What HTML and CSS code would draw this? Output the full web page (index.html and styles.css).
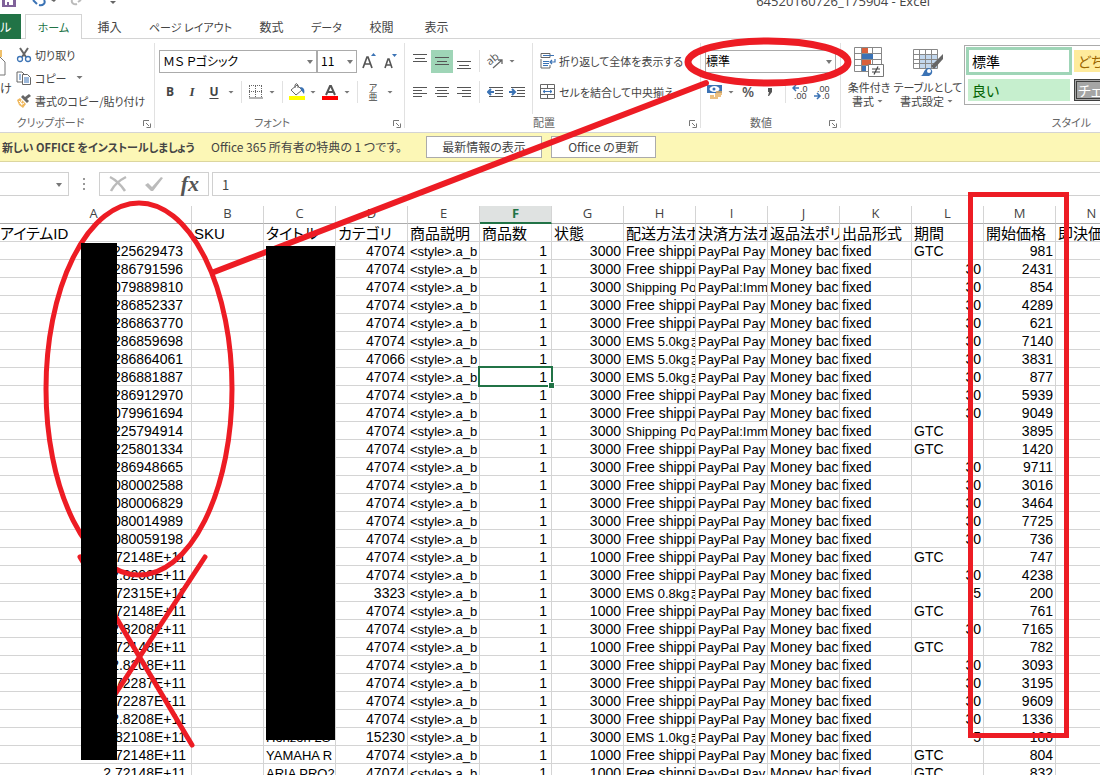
FILE: index.html
```html
<!DOCTYPE html>
<html lang="ja">
<head>
<meta charset="utf-8">
<title>64520160726_175904 - Excel</title>
<link rel="stylesheet" href="styles.css">
</head>
<body>
<div class="app">
  <header class="titlebar">
    <svg class="quick" width="130" height="14" viewBox="0 0 130 14" fill="none">
      <path d="M2 0v7h14V0h-3v5H5V0z" fill="#80629a"/><path d="M7 2h2v3H7z" fill="#80629a"/>
      <path d="M33 0l4 4M39 5c4 1 7-2 5-5" stroke="#3b73b5" stroke-width="2"/><path d="M51 0h5l-2 2z" fill="#666"/>
      <path d="M72 0c-1 3 2 5 5 4M78 2l3-2" stroke="#bbb" stroke-width="2"/>
      <path d="M110 1h6l-3 3z" fill="#666"/>
    </svg>
    <span class="title">64520160726_175904 - Excel</span>
  </header>

  <nav class="tabs">
    <button class="tab file">ル</button>
    <button class="tab active kana">ホーム</button>
    <button class="tab">挿入</button>
    <button class="tab wide kana">ページ レイアウト</button>
    <button class="tab">数式</button>
    <button class="tab kana">データ</button>
    <button class="tab">校閲</button>
    <button class="tab">表示</button>
  </nav>

  <div class="ribbon">
    <section class="group clipboard">
      <div class="tools">
        <button class="paste">
          <svg width="7" height="28" viewBox="0 0 7 28" fill="none"><path d="M0 2h2v7H0z" fill="#efc06b"/><path d="M0 9l5 5v13H0" stroke="#777"/></svg>
          <span>け</span>
        </button>
        <div class="commands">
          <button class="cmd"><svg width="16" height="16" viewBox="0 0 16 16" fill="none"><path d="M4 1l6 9M12 1L6 10" stroke="#666" stroke-width="2"/><circle cx="4" cy="12" r="2.5" stroke="#3b73b5" stroke-width="1.3"/><circle cx="12" cy="12" r="2.5" stroke="#3b73b5" stroke-width="1.3"/></svg>切り取り</button>
          <button class="cmd"><svg width="16" height="16" viewBox="0 0 16 16" fill="none"><path d="M6 12H1V2h5l2 2" stroke="#666"/><path d="M3 5h2M3 7h2M3 9h2" stroke="#3b73b5"/><path d="M6.500 4.500h5l3 3v7h-8z" fill="#fff" stroke="#666"/><path d="M8 8h5M8 10h5M8 12h5" stroke="#3b73b5"/></svg>コピー<i class="arrow gap"></i></button>
          <button class="cmd"><svg width="16" height="16" viewBox="0 0 16 16" fill="none"><path d="M1 7l3-2 6 6-3 4-4-3z" fill="#f0b95f"/><path d="M3 8l3 3M6 7l-2 4M5 12l3-2" stroke="#fff"/><path d="M5 4l6 6 2-2-2-2 4-3-2-2-4 3-2-2z" fill="#666"/></svg>書式のコピー/貼り付け</button>
        </div>
      </div>
      <footer class="caption">クリップボード<svg class="launch" width="8" height="8" viewBox="0 0 8 8" fill="none" stroke="#777"><path d="M.5 6V.5H6M3 3l3 3M7.500 3.500v4h-4"/></svg></footer>
    </section>

    <section class="group font">
      <div class="tools stack">
        <div class="line">
          <span class="drop name"><select aria-label="フォント"><option>ＭＳ Ｐゴシック</option></select></span>
          <span class="drop size"><select aria-label="サイズ"><option>11</option></select></span>
          <button class="btn" aria-label="拡大"><svg width="16" height="16" viewBox="0 0 16 16" fill="none"><path d="M2 15l4-11h1l4 11M3.500 11h6" stroke="#555" stroke-width="1.700"/><path d="M10 3h5l-2.500-3z" fill="#3b73b5"/></svg></button>
          <button class="btn" aria-label="縮小"><svg width="16" height="16" viewBox="0 0 16 16" fill="none"><path d="M2 15l3-9h1l3 9M3 12h5" stroke="#555" stroke-width="1.600"/><path d="M9 1h5l-2.500 3z" fill="#3b73b5"/></svg></button>
        </div>
        <div class="line">
          <button class="btn"><b>B</b></button><button class="btn"><b class="it">I</b></button><button class="btn"><b class="un">U</b></button><i class="arrow"></i>
          <i class="sep"></i>
          <button class="btn small" aria-label="罫線"><svg width="14" height="14" viewBox="0 0 14 14" stroke="#666" fill="none"><path d="M.5 1v12M6.500 1v12M12.500 1v12M0 .5h13M0 6.500h13" stroke-dasharray="1 1"/><path d="M0 13h14"/></svg></button><i class="arrow"></i>
          <i class="sep"></i>
          <button class="btn small" aria-label="塗りつぶし"><svg width="18" height="18" viewBox="0 0 18 18" fill="none"><path d="M3 7l6-5 5 5-6 5zM7 5V2q1-3 3 0v3" stroke="#666"/><path d="M12 4c4 0 5 3 4 7l-3-4z" fill="#3b73b5"/><path d="M1 13h16v4H1z" fill="#ff0"/></svg></button><i class="arrow"></i>
          <button class="btn" aria-label="文字色"><svg width="16" height="18" viewBox="0 0 16 18" fill="none"><path d="M4 12L8 3h1l4 9M5.500 9h6" stroke="#555" stroke-width="2"/><path d="M0 13h16v4H0z" fill="red"/></svg></button><i class="arrow"></i>
          <i class="sep"></i>
          <button class="btn ruby"><span>ア</span><span>亜</span></button><i class="arrow"></i>
        </div>
      </div>
      <footer class="caption">フォント<svg class="launch" width="8" height="8" viewBox="0 0 8 8" fill="none" stroke="#777"><path d="M.5 6V.5H6M3 3l3 3M7.500 3.500v4h-4"/></svg></footer>
    </section>

    <section class="group align">
      <div class="tools">
        <div class="stack">
          <div class="line">
            <button class="btn" aria-label="上揃え"><svg width="14" height="16" viewBox="0 0 14 16" stroke="#555"><path d="M0 1.500h14M2 5.500h10M0 8.500h14"/></svg></button>
            <button class="btn on" aria-label="上下中央"><svg width="14" height="16" viewBox="0 0 14 16" stroke="#555"><path d="M0 4.500h14M2 8.500h10M0 11.500h14"/></svg></button>
            <button class="btn" aria-label="下揃え"><svg width="14" height="16" viewBox="0 0 14 16" stroke="#555"><path d="M0 8.500h14M2 12.500h10M0 15.500h14"/></svg></button>
            <i class="sep"></i>
            <button class="btn" aria-label="方向"><svg width="18" height="18" viewBox="0 0 18 18" fill="none"><text class="ab" x="1" y="12" transform="rotate(-40 5 9)">ab</text><path d="M7 16l9-8M12 8h4v4" stroke="#666" stroke-width="1.300"/></svg></button><i class="arrow"></i>
          </div>
          <div class="line">
            <button class="btn" aria-label="左揃え"><svg width="14" height="12" viewBox="0 0 14 12" stroke="#555"><path d="M0 1.500h14M0 4.500h9M0 7.500h14M0 10.500h9"/></svg></button>
            <button class="btn" aria-label="中央揃え"><svg width="14" height="12" viewBox="0 0 14 12" stroke="#555"><path d="M0 1.500h14M2 4.500h10M0 7.500h14M2 10.500h10"/></svg></button>
            <button class="btn" aria-label="右揃え"><svg width="14" height="12" viewBox="0 0 14 12" stroke="#555"><path d="M0 1.500h14M5 4.500h9M0 7.500h14M5 10.500h9"/></svg></button>
            <i class="sep"></i>
            <button class="btn" aria-label="インデント減"><svg width="16" height="12" viewBox="0 0 16 12" stroke="#555" fill="none"><path d="M2 1.500h14M8 4.500h8M8 7.500h8M2 10.500h14"/><path d="M1 6h6M4 3L1 6l3 3" stroke="#3b73b5" stroke-width="2"/></svg></button>
            <button class="btn" aria-label="インデント増"><svg width="16" height="12" viewBox="0 0 16 12" stroke="#555" fill="none"><path d="M2 1.500h14M8 4.500h8M8 7.500h8M2 10.500h14"/><path d="M0 6h6M3 3l3 3-3 3" stroke="#3b73b5" stroke-width="2"/></svg></button>
          </div>
        </div>
        <div class="stack wraps">
          <button class="cmd"><svg width="16" height="16" viewBox="0 0 16 16" fill="none"><path d="M1 .5h9v4H1zM1 6v9h9M10 12v3" stroke="#666"/><path d="M3 2.500h11M3 8.500h6M3 10.500h6M3 12.500h5M15 6v3h-5M12 7l-2 2 2 2" stroke="#3b73b5" stroke-width="1.200"/></svg>折り返して全体を表示する</button>
          <button class="cmd"><svg width="16" height="16" viewBox="0 0 16 16" fill="none"><path d="M.5.5h14v14H.5zM.5 4.500h14M.5 10.500h14M7.500 0v4M7.500 11v4" stroke="#666"/><path d="M3 7.500h9M5 6L3 7.500 5 9M10 6l2 1.500L10 9" stroke="#3b73b5"/></svg>セルを結合して中央揃え</button>
        </div>
      </div>
      <footer class="caption">配置<svg class="launch" width="8" height="8" viewBox="0 0 8 8" fill="none" stroke="#777"><path d="M.5 6V.5H6M3 3l3 3M7.500 3.500v4h-4"/></svg></footer>
    </section>

    <section class="group number">
      <div class="tools stack">
        <div class="line"><span class="drop format"><select aria-label="表示形式"><option>標準</option></select></span></div>
        <div class="line">
          <button class="btn small" aria-label="通貨"><svg width="18" height="18" viewBox="0 0 18 18" fill="none"><path d="M1 2h15v8H1z" fill="#3b73b5"/><ellipse cx="8.500" cy="6" rx="5" ry="3" fill="#fff"/><circle cx="8" cy="6" r="1.500" fill="#3b73b5"/><path d="M10 9h6M9 11h7M9 13h6M4 13h4M4 15h8" stroke="#e8ac57" stroke-width="1.500"/></svg></button><i class="arrow"></i>
          <button class="btn sym">%</button>
          <button class="btn" aria-label="桁区切り"><svg width="6" height="10" viewBox="0 0 6 10"><path d="M1 1h4v4L2 9H1l1-4H1z" fill="#555"/></svg></button>
          <i class="sep"></i>
          <button class="btn dec" aria-label="小数点増"><svg width="18" height="16" viewBox="0 0 18 16" fill="none"><path d="M1 4h6M4 1L1 4l3 3" stroke="#3b73b5" stroke-width="1.500"/><text x="8" y="8">.0</text><text x="2" y="15">.00</text></svg></button>
          <button class="btn dec" aria-label="小数点減"><svg width="18" height="16" viewBox="0 0 18 16" fill="none"><text x="3" y="8">.00</text><path d="M0 12h6M3 9l3 3-3 3" stroke="#3b73b5" stroke-width="1.500"/><text x="8" y="15">.0</text></svg></button>
        </div>
      </div>
      <footer class="caption">数値<svg class="launch" width="8" height="8" viewBox="0 0 8 8" fill="none" stroke="#777"><path d="M.5 6V.5H6M3 3l3 3M7.500 3.500v4h-4"/></svg></footer>
    </section>

    <section class="group styles">
      <div class="tools">
        <button class="big cond"><svg width="30" height="30" viewBox="0 0 30 30" fill="none"><path d="M.5.5h27v24H.5zM7.500 0v24M18.500 0v24M0 6.500h28M0 12.500h28M0 18.500h28" stroke="#888"/><path d="M8 1h6v5H8zM8 13h9v5H8z" fill="#d9603b"/><path d="M8 7h11v5H8zM8 19h4v5H8z" fill="#3b73b5"/><path d="M14.500 17.500h15v12h-15z" fill="#fff" stroke="#777"/><path d="M18 22h8M18 25h8M24 19.500l-4 8" stroke="#444" stroke-width="1.200"/></svg>条件付き<span>書式<i class="arrow"></i></span></button>
        <button class="big tablef"><svg width="30" height="30" viewBox="0 0 30 30" fill="none"><path d="M7 7h17v14H7z" fill="#c3d8ee"/><path d="M.5 2.500h24v19H.5zM6.500 2v19M12.500 2v19M18.500 2v19M0 7.500h24M0 12.500h24M0 16.500h24" stroke="#888"/><path d="M30 7L18 19l3 3 9-10z" fill="#666"/><path d="M7 29c4 0 3-7 8-8 5 0 6 6 1 8z" fill="#3b73b5"/><circle cx="16" cy="24" r="2" fill="#fff"/></svg>テーブルとして<span>書式設定<i class="arrow"></i></span></button>
        <div class="gallery">
          <button class="style normal">標準</button><button class="style neutral">どち</button>
          <button class="style good">良い</button><button class="style check">チェ</button>
        </div>
      </div>
      <footer class="caption end">スタイル</footer>
    </section>
  </div>

  <div class="notice">
    <strong>新しい OFFICE をインストールしましょう</strong>
    <span>Office 365 所有者の特典の 1 つです。</span>
    <button>最新情報の表示</button><button class="second">Office の更新</button>
  </div>

  <div class="formula">
    <span class="namebox"><input aria-label="名前"></span>
    <svg width="4" height="16" viewBox="0 0 4 16" fill="#999"><path d="M1 2h2v2H1zM1 7h2v2H1zM1 12h2v2H1z"/></svg>
    <div class="fx">
      <svg width="18" height="18" viewBox="0 0 18 18" fill="none"><path d="M1 2c6 3 11 8 15 14M17 2C11 5 5 10 2 16" stroke="#bbb" stroke-width="2.500"/></svg>
      <svg width="20" height="18" viewBox="0 0 20 18"><path d="M1 10l3-2 4 4 9-10 2 1L9 16H7z" fill="#bbb"/></svg>
      <span>fx</span>
    </div>
    <input class="value" aria-label="数式バー" value="1">
  </div>

  <table class="sheet">
    <colgroup><col class="first"><col span="13" class="col"></colgroup>
    <thead><tr><th>A</th><th>B</th><th>C</th><th>D</th><th>E</th><th class="current">F</th><th>G</th><th>H</th><th>I</th><th>J</th><th>K</th><th>L</th><th>M</th><th>N</th></tr></thead>
    <tbody id="rows">
      <tr class="names"><td>アイテムID</td><td>SKU</td><td>タイトル</td><td>カテゴリ</td><td>商品説明</td><td>商品数</td><td>状態</td><td>配送方法ポ</td><td>決済方法ポ</td><td>返品法ポリ</td><td>出品形式</td><td>期間</td><td>開始価格</td><td>即決価</td></tr>
    </tbody>
  </table>

  <svg class="marks" width="1100" height="775" viewBox="0 0 1100 775" fill="none" stroke="#ed1c24" stroke-width="5" stroke-linecap="round">
    <ellipse cx="139" cy="389" rx="93" ry="186"/>
    <path d="M80 557L192 745M205 557L112 699"/>
    <path d="M214 272L706 83" stroke-width="6"/>
    <ellipse cx="768" cy="62" rx="80" ry="21" stroke-width="7"/>
    <path d="M970.500 194.500h96v541h-96z" stroke-linecap="butt"/>
    <path d="M81 243h36v517H81zM266 246h69v494h-69z" fill="#000" stroke="none"/>
  </svg>
</div>
<script src="sheet.js"></script>
</body>
</html>
```

FILE: styles.css
```css
* { box-sizing: border-box; }
body {
  margin: 0;
  background: #fff;
  color: #444;
  font: 12px/16px "Noto Sans CJK JP", sans-serif;
  font-feature-settings: "palt";
}
button, input, select {
  margin: 0;
  padding: 0;
  border: 0;
  border-radius: 0;
  background: none;
  color: inherit;
  font: inherit;
  font-feature-settings: inherit;
}
svg { display: block; flex: none; }
.app { position: relative; height: 100vh; overflow: hidden; }

.titlebar { display: flex; justify-content: space-between; height: 14px; padding-right: 170px; overflow: hidden; }
.title { font: 13px/2px "Open Sans", sans-serif; }

.tabs { display: flex; height: 25px; border-bottom: 1px solid #d4d4d4; }
.tab { width: 55px; height: 25px; flex: none; }
.tab.wide { width: 107px; }
.tab.file { width: 21px; margin-right: 4px; background: #217346; color: #fff; text-align: left; }
.tab.active { width: 57px; border: 1px solid #d4d4d4; border-bottom: 0; background: #fff; color: #217346; }
.kana { font-size: 11px; }

.ribbon { display: flex; height: 94px; border-bottom: 1px solid #d4d4d4; overflow: hidden; }
.group { position: relative; display: flex; flex: none; flex-direction: column; padding: 4px 0 0; }
.group::after { content: ""; position: absolute; right: 0; top: 4px; bottom: 4px; width: 1px; background: #e1e1e1; }
.tools { display: flex; flex: 1; }
.stack { display: flex; flex-direction: column; gap: 7px; padding-top: 6px; }
.line { display: flex; align-items: center; height: 24px; }
.caption { position: relative; height: 18px; padding-right: 54px; color: #666; font-size: 11px; text-align: center; }
.launch { position: absolute; right: 4px; top: 6px; }
.caption.end { padding-right: 9px; text-align: right; }

.clipboard { width: 155px; }
.font { width: 250px; padding-left: 4px; }
.align { width: 296px; padding-left: 4px; }
.number { width: 140px; padding-left: 4px; }
.styles { flex: 1; min-width: 0; padding-left: 3px; }
.styles::after { display: none; }
.font .caption { padding-right: 20px; }
.align .caption { padding-right: 22px; }
.number .caption { padding-right: 24px; }

.paste { display: flex; width: 16px; flex-direction: column; align-items: flex-start; gap: 4px; padding-top: 5px; }
.commands { display: flex; flex-direction: column; }
.cmd { display: flex; height: 23px; align-items: center; gap: 3px; font-size: 11px; white-space: nowrap; }
.wraps { gap: 8px; margin-left: 4px; padding-left: 7px; border-left: 1px solid #e1e1e1; }
.arrow { flex: none; width: 12px; height: 3px; background: #777; clip-path: polygon(25% 0, 75% 0, 50% 100%); }
.arrow.gap { margin-left: 4px; }
.btn { display: flex; width: 22px; height: 23px; flex: none; align-items: center; justify-content: center; }
.btn.small { width: 20px; }
.btn.on { background: #9fd5b7; }
.btn b { font: bold 12px/16px "Open Sans", sans-serif; }
.btn .it { font: italic bold 13px/16px "Liberation Serif", serif; }
.btn .un { text-decoration: underline; text-underline-offset: 2px; }
.sep { flex: none; width: 1px; height: 22px; margin: 0 4px; background: #e1e1e1; }
.ruby { width: 22px; flex-direction: column; font-size: 9px; line-height: 9px; }
.ab { fill: #555; font: 11px "Open Sans", sans-serif; }
.sym { color: #555; font: 600 14px/20px "Open Sans", sans-serif; }
.dec text { fill: #444; font: 9px "Liberation Sans", sans-serif; }

.drop { position: relative; height: 23px; }
.drop select { width: 100%; height: 100%; padding: 0 3px; border: 1px solid #ababab; appearance: none; background: #fff; color: #000; }
.drop::after, .namebox::after { content: ""; position: absolute; right: 4px; top: 10px; border: 3px solid transparent; border-top: 4px solid #777; border-bottom: 0; }
.name { width: 158px; }
.size { width: 40px; margin-right: 1px; }
.format { width: 131px; }
.drop.format select { padding: 0; }

.big { display: flex; flex-direction: column; align-items: center; width: 50px; padding-top: 4px; font-size: 11px; line-height: 14px; white-space: nowrap; }
.big svg { margin-bottom: 3px; }
.big span { display: flex; align-items: center; }
.big.tablef { width: 68px; }
.gallery { display: grid; grid-template-columns: 106px 106px; grid-template-rows: 29px 24px; gap: 2px; height: 60px; margin: 2px 0 0 2px; padding: 1px; border: 1px solid #ababab; border-right: 0; overflow: hidden; flex: 1; }
.style { height: 22px; margin: 1px 2px; padding: 0 4px; font-size: 14px; line-height: 20px; text-align: left; color: #000; overflow: hidden; white-space: nowrap; }
.style.normal { height: 28px; margin: 0; padding: 0 3px; border: 3px solid #9fd5b7; }
.style.neutral { margin: 3px 0; background: #ffeb9c; color: #9c6500; }
.style.good { background: #c6efce; color: #006100; }
.style.check { margin: 1px 0; padding: 0 1px; border: 3px double #3f3f3f; background: #a5a5a5; color: #fff; line-height: 16px; }

.notice { display: flex; align-items: center; height: 29px; padding-left: 2px; border-bottom: 1px solid #dcd69f; background: #fcf7b6; white-space: nowrap; }
.notice strong { width: 209px; flex: none; font-size: 11px; }
.notice span { width: 215px; flex: none; }
.notice button { width: 116px; height: 22px; border: 1px solid #ababab; background: #fff; }
.notice .second { width: 105px; margin-left: 9px; }

.formula { display: flex; height: 44px; align-items: center; }
.namebox { position: relative; width: 69px; height: 24px; margin-right: 13px; border: 1px solid #d0d0d0; border-left: 0; }
.namebox::after { right: 6px; }
.namebox input { width: 100%; height: 100%; }
.fx { display: flex; align-items: center; justify-content: space-between; width: 110px; height: 24px; margin-left: 13px; padding: 0 9px; border: 1px solid #d0d0d0; color: #555; }
.fx span { font: italic bold 22px/20px "Liberation Serif", serif; }
.value { flex: 1; height: 24px; margin-left: 3px; padding-left: 9px; border: 1px solid #d0d0d0; border-right: 0; font-size: 13px; }

.sheet { width: 1128px; border-collapse: separate; border-spacing: 0; table-layout: fixed; color: #000; font: 14px/15px "Liberation Sans", "Noto Sans CJK JP", sans-serif; font-feature-settings: "palt"; }
.first { width: 192px; }
.col { width: 72px; }
.sheet th { height: 18px; padding: 0 0 2px; border-right: 1px solid #d4d4d4; border-bottom: 1px solid #ababab; color: #444; font: 13px/15px "Open Sans", sans-serif; }
.sheet th:first-child { padding-right: 4px; }
.sheet th.current { border-bottom: 2px solid #217346; background: #dfe2e1; color: #217346; font-weight: bold; line-height: 14px; }
.sheet td { height: 18px; padding: 2px 0 0 2px; border-right: 1px solid #d4d4d4; border-bottom: 1px solid #d4d4d4; overflow-x: clip; overflow-y: visible; white-space: nowrap; }
.sheet .num { padding-left: 0; padding-right: 2px; text-align: right; }
.sheet .id { padding-right: 8px; }
.sheet .exp { padding-right: 5px; }
.sheet .count { padding-right: 4px; }
.sheet .tight { font-size: 13px; }
.sheet .names td { font-size: 15px; }
.sheet .names td:first-child { padding-left: 0; }
.sheet .selected { position: relative; overflow: visible; }
.selected::before { content: ""; position: absolute; inset: -2px; border: 2px solid #217346; }
.selected::after { content: ""; position: absolute; right: -3px; bottom: -3px; width: 5px; height: 5px; background: #217346; outline: 1px solid #fff; }
.marks { position: absolute; left: 0; top: 0; pointer-events: none; }
```

FILE: sheet.js
```js
const FREE = "Free shippi";
const SHIP = "Shipping Po";
// id, title, category, condition, shipping, duration, price
const items = [
  ["225629473", "", 47074, 3000, FREE, "GTC", 981],
  ["286791596", "", 47074, 3000, FREE, 30, 2431],
  ["079889810", "", 47074, 3000, SHIP, 30, 854],
  ["286852337", "", 47074, 3000, FREE, 30, 4289],
  ["286863770", "", 47074, 3000, FREE, 30, 621],
  ["286859698", "", 47074, 3000, "EMS 5.0kgま", 30, 7140],
  ["286864061", "", 47066, 3000, "EMS 5.0kgま", 30, 3831],
  ["286881887", "", 47074, 3000, "EMS 5.0kgま", 30, 877],
  ["286912970", "", 47074, 3000, FREE, 30, 5939],
  ["079961694", "", 47074, 3000, FREE, 30, 9049],
  ["225794914", "", 47074, 3000, SHIP, "GTC", 3895],
  ["225801334", "", 47074, 3000, FREE, "GTC", 1420],
  ["286948665", "", 47074, 3000, FREE, 30, 9711],
  ["080002588", "", 47074, 3000, FREE, 30, 3016],
  ["080006829", "", 47074, 3000, FREE, 30, 3464],
  ["080014989", "", 47074, 3000, FREE, 30, 7725],
  ["080059198", "", 47074, 3000, FREE, 30, 736],
  ["2.72148E+11", "", 47074, 1000, FREE, "GTC", 747],
  ["2.8208E+11", "", 47074, 3000, FREE, 30, 4238],
  ["2.72315E+11", "", 3323, 3000, "EMS 0.8kgま", 5, 200],
  ["2.72148E+11", "", 47074, 1000, FREE, "GTC", 761],
  ["2.8208E+11", "", 47074, 3000, FREE, 30, 7165],
  ["2.72148E+11", "", 47074, 1000, FREE, "GTC", 782],
  ["2.8208E+11", "", 47074, 3000, FREE, 30, 3093],
  ["2.72287E+11", "", 47074, 3000, FREE, 30, 3195],
  ["2.72287E+11", "", 47074, 3000, FREE, 30, 9609],
  ["2.8208E+11", "", 47074, 3000, FREE, 30, 1336],
  ["2.82108E+11", "Horizon 2S", 15230, 3000, "EMS 1.0kgま", 5, 180],
  ["2.72148E+11", "YAMAHA R", 47074, 1000, FREE, "GTC", 804],
  ["2.72148E+11", "ARIA PRO2", 47074, 1000, FREE, "GTC", 832]
];

const body = document.getElementById("rows");
items.forEach(([id, title, category, condition, shipping, duration, price], index) => {
  const row = body.insertRow();
  const add = (text, kind) => {
    const cell = row.insertCell();
    cell.textContent = text;
    if (kind) cell.className = kind;
  };
  add(id, id.includes("E") ? "num exp" : "num id");
  add("");
  add(title, "tight");
  add(category, "num");
  add("<style>.a_b", "tight");
  add(1, index === 7 ? "num count selected" : "num count");
  add(condition, "num");
  add(shipping, shipping === FREE ? "" : "tight");
  add(shipping === SHIP ? "PayPal:Imm" : "PayPal Pay", "tight");
  add("Money bac");
  add("fixed");
  add(duration, duration === "GTC" ? "" : "num");
  add(price, "num");
  add("");
});
```
